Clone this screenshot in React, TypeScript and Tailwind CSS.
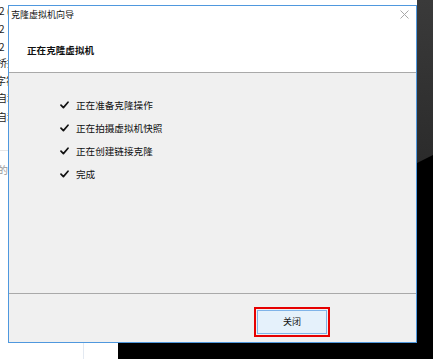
import React from "react";

const Check = () => (
  <svg width="9" height="8" viewBox="0 0 9 8" className="shrink-0">
    <path d="M1 4.2 L3.4 6.6 L8 1.2" fill="none" stroke="#111" strokeWidth="1.7" strokeLinecap="round" strokeLinejoin="round" />
  </svg>
);

const steps = ["正在准备克隆操作", "正在拍摄虚拟机快照", "正在创建链接克隆", "完成"];

const leftBits: { y: number; t: string; x: number; c?: string }[] = [
  { y: 5, t: "2 (", x: -1 },
  { y: 23, t: "2", x: -1 },
  { y: 41, t: "2", x: -1 },
  { y: 57, t: "桥接", x: -3 },
  { y: 75, t: "字符", x: -4 },
  { y: 92, t: "自动", x: -3 },
  { y: 111, t: "自动", x: -3 },
  { y: 164, t: "的", x: -2, c: "#9a9a9a" },
];

export default function App() {
  return (
    <div className="relative w-[433px] h-[359px] overflow-hidden bg-black font-['Noto_Sans_CJK_SC',sans-serif]">
      {/* background windows */}
      <div className="absolute left-0 top-0 w-[118px] h-[359px] bg-white" />
      <div className="absolute left-[83px] top-[300px] w-px h-[59px] bg-[#e3e9f1]" />
      <div className="absolute left-0 top-0 w-[417px] h-[343px] bg-white" />
      <div className="absolute left-0 top-[150px] w-[8px] h-px bg-[#e6e6e6]" />
      {leftBits.map((b, i) => (
        <div
          key={i}
          className="absolute text-[10px] leading-[12px] whitespace-nowrap"
          style={{ top: b.y, left: b.x, color: b.c ?? "#222" }}
        >
          {b.t}
        </div>
      ))}
      <svg className="absolute left-[417px] top-0" width="16" height="359" viewBox="0 0 16 359">
        <defs>
          <linearGradient id="g" x1="0" y1="0" x2="0" y2="1">
            <stop offset="0" stopColor="#3a3a3a" />
            <stop offset="1" stopColor="#2b2b2b" />
          </linearGradient>
        </defs>
        <polygon points="0,0 16,0 16,155 0,163" fill="url(#g)" />
      </svg>

      {/* dialog */}
      <div className="absolute left-[8px] top-[5px] w-[409px] h-[338px] border border-[#4f98de] bg-[#f0f0f0] flex flex-col">
        <div className="bg-white">
          <div className="h-[17px] flex items-center justify-between pl-[2px] pr-[7px]">
            <span className="text-[9px] leading-[12px] text-[#111]">克隆虚拟机向导</span>
            <svg width="9" height="9" viewBox="0 0 9 9">
              <path d="M0.5 0.5 L8.5 8.5 M8.5 0.5 L0.5 8.5" stroke="#a8a8a8" strokeWidth="1" />
            </svg>
          </div>
          <div className="h-[49px] pt-[12px] pl-[18px]">
            <span className="text-[9.6px] leading-[12px] font-bold text-[#111]">正在克隆虚拟机</span>
          </div>
        </div>
        <div className="h-px bg-[#a9a9a9]" />
        <div className="h-[220px] pt-[20px] pl-[51px] flex flex-col">
          {steps.map((s) => (
            <div key={s} className="h-[23px] flex items-center gap-[7px]">
              <Check />
              <span className="text-[9.6px] leading-[12px] text-[#111]">{s}</span>
            </div>
          ))}
        </div>
        <div className="h-px bg-[#a9a9a9]" />
        <div className="flex-1 flex justify-end pt-[13px] pr-[86px]">
          <div className="w-[76px] h-[30px] border-[2px] border-[#e60000] p-px">
            <div className="w-full h-full border border-[#7fb3e8] bg-[#e5f1fb] flex items-center justify-center">
              <span className="text-[9px] leading-[12px] text-[#111]">关闭</span>
            </div>
          </div>
        </div>
      </div>
    </div>
  );
}
